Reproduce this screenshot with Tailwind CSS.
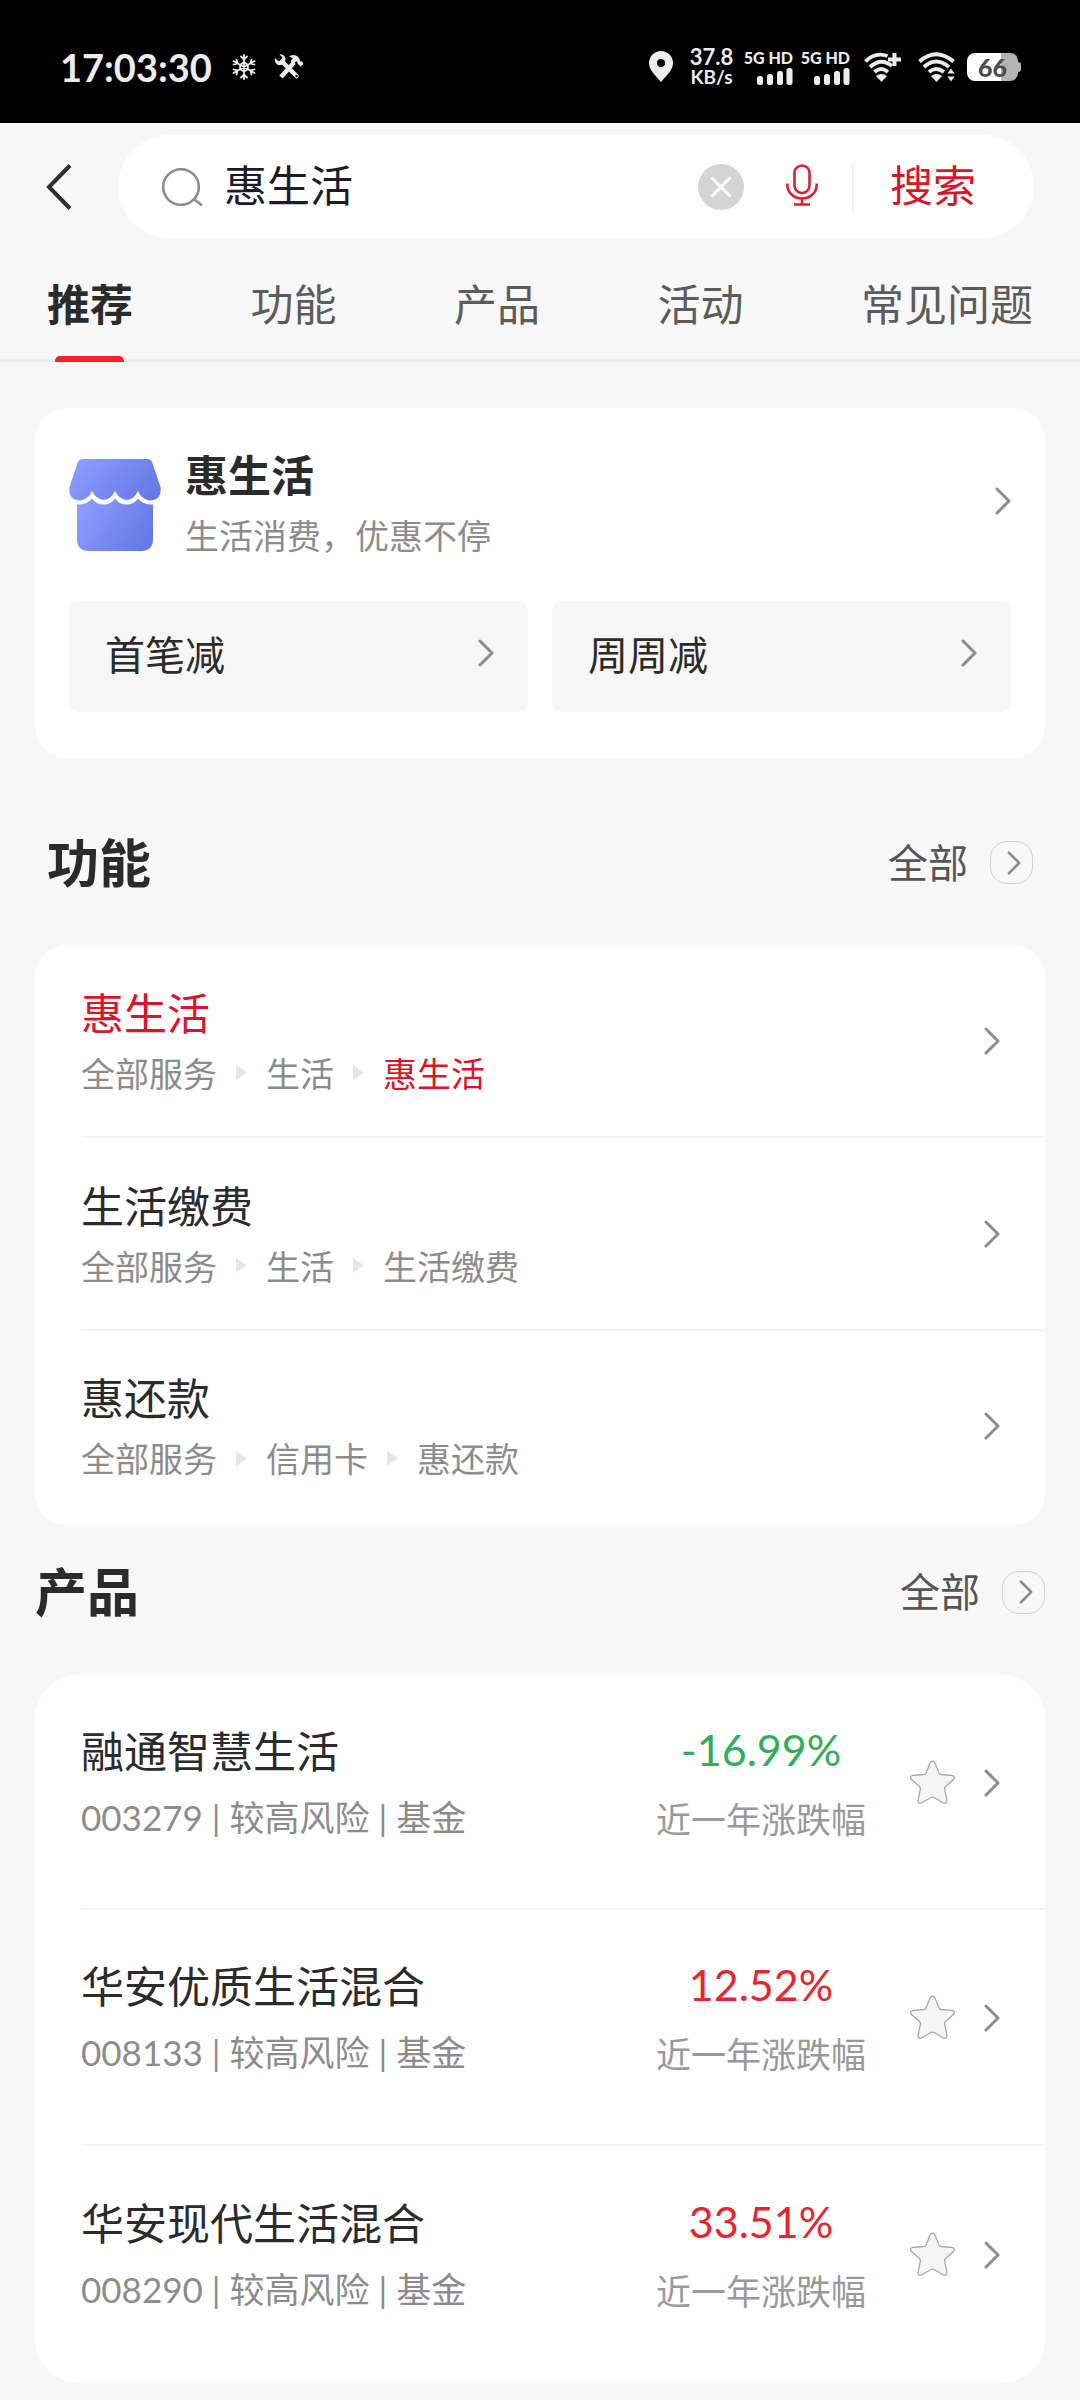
<!DOCTYPE html>
<html lang="zh-CN">
<head>
<meta charset="utf-8">
<meta name="viewport" content="width=device-width, initial-scale=1">
<title>惠生活 - 搜索</title>
<script src="https://cdn.jsdelivr.net/npm/@tailwindcss/browser@4"></script>
</head>
<body class="min-h-screen bg-[#f7f7f7] font-['Noto_Sans_CJK_SC',sans-serif] text-[#2b2b2b]">

<svg class="hidden" aria-hidden="true">
  <symbol id="chevron" viewBox="0 0 16 28"><path d="M2 2 14 14 2 26" fill="none" stroke="currentColor" stroke-width="3" stroke-linecap="round" stroke-linejoin="round"/></symbol>
  <symbol id="caret" viewBox="0 0 11 15"><path d="M0 0 11 7.500 0 15Z" fill="#e6e6e6"/></symbol>
  <symbol id="star" viewBox="0 0 46 46"><path d="M20 3Q22.500-.8 25 3L29 13Q29.500 14.300 31 14.500L42 15.300Q46 16 43.500 19.500L35.500 26.500Q34.500 27.500 34.600 29L37 40.500Q37 44 33.500 43L24.500 37.800Q22.500 36.600 20.500 37.800L11.500 43Q8 44 8 40.500L10.400 29Q10.500 27.500 9.500 26.500L1.500 19.500Q-1 16 3 15.300L14 14.500Q15.500 14.300 16 13Z" fill="#f5f5f5" stroke="#a6a6a6" stroke-width="1.300"/></symbol>
  <symbol id="bars" viewBox="0 0 36 17"><g fill="#ececec"><rect x="0" y="8" width="6" height="9" rx="2.500"/><rect x="10" y="6" width="6" height="11" rx="2.500"/><rect x="20" y="3" width="6" height="14" rx="2.500"/><rect x="29.500" y="0" width="6" height="17" rx="2.500"/></g></symbol>
</svg>

<!-- System status bar -->
<div class="flex h-[123px] items-center justify-between bg-black pt-[14px] pr-[59px] pb-1 pl-[60px] font-['Lato','Noto_Sans_CJK_SC',sans-serif] text-[#ececec]">
  <div class="flex items-center">
    <span class="text-[38px] leading-[44px] font-bold">17:03:30</span>
    <svg class="ml-5 h-[26px] w-6" viewBox="0 0 24 26" fill="none" stroke="currentColor" stroke-width="1.800" stroke-linecap="round">
      <path d="M12 1v24M1.500 7 22.500 19M1.500 19 22.500 7M9 2.500l3 3 3-3M9 23.500l3-3 3 3M1.500 10.500l4-1-1-4M22.500 15.500l-4 1 1 4M1.500 15.500l4 1-1 4M22.500 10.500l-4-1 1-4"/>
      <circle cx="12" cy="13" r="4"/>
    </svg>
    <svg class="ml-[18px] h-[26px] w-[30px]" viewBox="0 0 30 26" fill="none" stroke="currentColor">
      <path d="M8 7.500 22.500 22" stroke-width="4.500" stroke-linecap="round"/>
      <path d="M7 23 20 8.500" stroke-width="4.500"/>
      <path d="M1 4 4.500 7.300 7.600 6.300 8.300 3.200 5.200 .3Q10-.3 11.300 4q.8 4-2 6.300Q6 12 2.800 10.200 0 8 1 4Z" fill="currentColor" stroke="none"/>
      <path d="M15 2.500Q20-.5 24 2.800 26 4.500 26 7.500l2-.3L29.500 10 26.500 12.500 23.800 9.800 23 7.500 21.500 7.800 19.800 10 16.500 7 18.800 4.500Q17.500 2.800 15 2.500Z" fill="currentColor" stroke="none"/>
      <circle cx="22.500" cy="22" r="1.200" fill="#000" stroke="none"/>
    </svg>
  </div>
  <div class="flex items-center">
    <svg class="h-[31px] w-6" viewBox="0 0 24 31"><path fill="currentColor" fill-rule="evenodd" d="M12 0A12 12 0 0 0 0 12C0 19 6 24 12 31 18 24 24 19 24 12A12 12 0 0 0 12 0ZM12 8a4 4 0 1 1 0 8 4 4 0 0 1 0-8Z"/></svg>
    <div class="ml-4 w-[45px] text-center font-bold">
      <div class="text-[22px] leading-[20px]">37.8</div>
      <div class="text-[19px] leading-[20px]">KB/s</div>
    </div>
    <div class="ml-3 flex w-[47px] flex-col items-end gap-[2px]">
      <div class="text-[16px] leading-[17px] font-black whitespace-nowrap">5G HD</div>
      <svg class="h-[17px] w-9"><use href="#bars"/></svg>
    </div>
    <div class="ml-[10px] flex w-[47px] flex-col items-end gap-[2px]">
      <div class="text-[16px] leading-[17px] font-black whitespace-nowrap">5G HD</div>
      <svg class="h-[17px] w-9"><use href="#bars"/></svg>
    </div>
    <svg class="ml-[14px] h-[30px] w-[38px]" viewBox="0 0 38 30" fill="none" stroke="currentColor" stroke-width="3.800">
      <path d="M1.500 9.500Q11-.5 23.500 4M6 15Q17 5 28 14M10.500 20Q17 14 24 20"/>
      <path d="M30.500 1v13M24 7.500h13" stroke-width="4"/>
      <path d="M12 24Q17.500 20 23 24L17.500 30Z" fill="currentColor" stroke="none"/>
    </svg>
    <svg class="ml-4 h-[30px] w-[37px]" viewBox="0 0 37 30" fill="none" stroke="currentColor" stroke-width="3.800">
      <path d="M1.500 9.500Q18-5 35.500 9.500M6 15Q18 4 31 15M11 20Q18 14 26 20"/>
      <path d="M13 24Q18.500 20 24 24L18.500 30Z" fill="currentColor" stroke="none"/>
      <path d="M29.500 21.500 33 16.500l3.500 5ZM29.500 24.500 33 29.500l3.500-5Z" fill="currentColor" stroke="none"/>
    </svg>
    <div class="ml-3 flex items-center">
      <div class="h-7 w-[51px] rounded-[8px] bg-linear-to-r from-white from-66% to-[#b4b4b4] to-66% text-center text-[25px] leading-7 font-black text-[#4c4c4c]">66</div>
      <div class="h-[10px] w-[3px] rounded-r-sm bg-[#b4b4b4]"></div>
    </div>
  </div>
</div>

<!-- Search bar -->
<form class="flex items-center pt-3 pr-[46px] pl-[46px]" onsubmit="return false">
  <button type="button" aria-label="返回" class="mr-[46px] shrink-0">
    <svg class="h-[46px] w-[26px]" viewBox="0 0 26 46" fill="none" stroke="#2e2e3a" stroke-width="4"><path d="M24 1.500 3 23 24 44.500"/></svg>
  </button>
  <div class="flex h-[103px] min-w-0 flex-1 items-center rounded-full bg-white pr-[58px] pl-11">
    <svg class="h-[40px] w-[42px] shrink-0" viewBox="0 0 42 40" fill="none" stroke="#8c8c8c" stroke-width="2.600"><circle cx="19" cy="20" r="17.800"/><path d="m32 32 8 6.500"/></svg>
    <input type="text" aria-label="搜索内容" value="惠生活" class="ml-5 h-20 min-w-0 flex-1 bg-transparent pb-2 text-[43px] leading-[64px] text-[#1c1c28] outline-none">
    <button type="button" aria-label="清除" class="shrink-0">
      <svg class="size-[46px]" viewBox="0 0 46 46"><circle cx="23" cy="23" r="23" fill="#d4d4d4"/><path d="m13.500 13.500 19 19m0-19-19 19" stroke="#fff" stroke-width="2.800"/></svg>
    </button>
    <button type="button" aria-label="语音搜索" class="ml-[42px] shrink-0 pb-1">
      <svg class="h-[42px] w-8" viewBox="0 0 32 42" fill="none" stroke="#dc1e32" stroke-width="2.600"><rect x="8.500" y="1.500" width="15" height="27.500" rx="7.500"/><path d="M1.300 19.500v1.500a14.700 13.500 0 0 0 29.400 0v-1.500M16 34.500v6M8 40.500h16"/></svg>
    </button>
    <span class="ml-[34px] h-[50px] w-[2px] bg-[#f2f2f2]"></span>
    <button type="submit" class="ml-9 shrink-0 pb-2 text-[43px] leading-[64px] text-[#dc1428]">搜索</button>
  </div>
</form>

<!-- Result categories -->
<nav class="flex h-[124px] justify-between border-b-3 border-[#ebebeb] px-[47px] pt-[7px] text-[43px] leading-[64px] text-[#5c5c5c]">
  <a href="#" aria-current="page" class="relative flex items-center font-bold text-[#2b2b2b]">推荐<span class="absolute -bottom-[3px] left-2 h-[6px] w-[69px] rounded-t-[5px] bg-[#f5222d]"></span></a>
  <a href="#" class="flex items-center">功能</a>
  <a href="#" class="flex items-center">产品</a>
  <a href="#" class="flex items-center">活动</a>
  <a href="#" class="flex items-center">常见问题</a>
</nav>

<main class="px-[35px] pt-[46px] pb-[17px]">

  <!-- Best match -->
  <section class="rounded-[32px] bg-white px-[34px] pt-[37px] pb-[46px]">
    <a href="#" class="flex items-center">
      <svg class="h-[94px] w-[92px] shrink-0" viewBox="0 0 92 94">
        <defs><linearGradient id="shop" x1="0" y1=".3" x2="1" y2=".7"><stop offset="0" stop-color="#8b9cff"/><stop offset="1" stop-color="#6578e4"/></linearGradient></defs>
        <path fill="url(#shop)" d="M14 1H78Q82 1 83.500 5L91.500 29Q93 42 80.500 42.500 72 41 69 33 65 41.500 57.500 42 50 41 46 33 42 41.500 34.500 42 27 41 23 33 20 41 11.500 42.500-1 42 .5 29L8.500 5Q10 1 14 1Z"/>
        <path fill="url(#shop)" d="M8 46.500Q18 47 23 40.500 27 46.500 34.500 46.500 42 46.500 46 40.500 50 46.500 57.500 46.500 65 46.500 69 40.500 74 47 84 46.500V81Q84 93 72 93H20Q8 93 8 81Z"/>
      </svg>
      <span class="ml-6 flex flex-1 flex-col">
        <span class="pb-1 text-[43px] leading-[56px] font-bold">惠生活</span>
        <span class="text-[34px] leading-[60px] text-[#8c8c8c]">生活消费，优惠不停</span>
      </span>
      <svg class="mb-2 h-7 w-4 text-[#8c8c8c]"><use href="#chevron"/></svg>
    </a>
    <div class="mt-9 grid grid-cols-2 gap-6 text-[40px] leading-[60px]">
      <a href="#" class="flex h-[111px] items-center justify-between rounded-[10px] bg-[#f6f6f6] pr-[34px] pb-[7px] pl-9">首笔减<svg class="h-7 w-4 text-[#8c8c8c]"><use href="#chevron"/></svg></a>
      <a href="#" class="flex h-[111px] items-center justify-between rounded-[10px] bg-[#f6f6f6] pr-[34px] pb-[7px] pl-9">周周减<svg class="h-7 w-4 text-[#8c8c8c]"><use href="#chevron"/></svg></a>
    </div>
  </section>

  <!-- Functions -->
  <section>
    <div class="flex h-[187px] items-center justify-between px-3 pt-[22px]">
      <h2 class="pb-1 text-[52px] leading-[72px] font-bold">功能</h2>
      <a href="#" class="flex items-center gap-[22px] text-[40px] leading-[60px] text-[#555]"><span class="pb-1">全部</span><span class="flex size-[43px] items-center justify-center rounded-[17px] border border-[#d0d0d0] pl-1"><svg class="h-6 w-[14px] text-[#8c8c8c]"><use href="#chevron"/></svg></span></a>
    </div>
    <ul class="rounded-[32px] bg-white pl-[46px]">
      <li class="border-b-2 border-[#f3f3f3]">
        <a href="#" class="flex h-[191px] items-center justify-between pr-[45px]">
          <span class="flex flex-col">
            <span class="text-[43px] leading-[64px] text-[#dc1428]">惠生活</span>
            <span class="flex items-center gap-[19px] text-[34px] leading-[60px] text-[#8c8c8c]">全部服务<svg class="h-[15px] w-[11px]"><use href="#caret"/></svg>生活<svg class="h-[15px] w-[11px]"><use href="#caret"/></svg><span class="text-[#dc1428]">惠生活</span></span>
          </span>
          <svg class="h-7 w-4 text-[#8c8c8c]"><use href="#chevron"/></svg>
        </a>
      </li>
      <li class="border-b-2 border-[#f3f3f3]">
        <a href="#" class="flex h-[191px] items-center justify-between pr-[45px]">
          <span class="flex flex-col">
            <span class="text-[43px] leading-[64px]">生活缴费</span>
            <span class="flex items-center gap-[19px] text-[34px] leading-[60px] text-[#8c8c8c]">全部服务<svg class="h-[15px] w-[11px]"><use href="#caret"/></svg>生活<svg class="h-[15px] w-[11px]"><use href="#caret"/></svg>生活缴费</span>
          </span>
          <svg class="h-7 w-4 text-[#8c8c8c]"><use href="#chevron"/></svg>
        </a>
      </li>
      <li>
        <a href="#" class="flex h-[194px] items-center justify-between pr-[45px] pb-1">
          <span class="flex flex-col">
            <span class="text-[43px] leading-[64px]">惠还款</span>
            <span class="flex items-center gap-[19px] text-[34px] leading-[60px] text-[#8c8c8c]">全部服务<svg class="h-[15px] w-[11px]"><use href="#caret"/></svg>信用卡<svg class="h-[15px] w-[11px]"><use href="#caret"/></svg>惠还款</span>
          </span>
          <svg class="h-7 w-4 text-[#8c8c8c]"><use href="#chevron"/></svg>
        </a>
      </li>
    </ul>
  </section>

  <!-- Products -->
  <section>
    <div class="flex h-[150px] items-center justify-between pb-4">
      <h2 class="pb-1 text-[52px] leading-[72px] font-bold">产品</h2>
      <a href="#" class="flex items-center gap-[22px] text-[40px] leading-[60px] text-[#555]"><span class="pb-1">全部</span><span class="flex size-[43px] items-center justify-center rounded-[17px] border border-[#d0d0d0] pl-1"><svg class="h-6 w-[14px] text-[#8c8c8c]"><use href="#chevron"/></svg></span></a>
    </div>
    <ul class="rounded-[44px] bg-white pl-[46px]">
      <li class="flex h-[235px] items-center border-b-2 border-[#f3f3f3] pr-[45px] pb-[18px]">
        <a href="#" class="flex flex-1 flex-col">
          <span class="text-[43px] leading-[68px]">融通智慧生活</span>
          <span class="font-['Lato','Noto_Sans_CJK_SC',sans-serif] text-[35px] leading-[68px] text-[#8c8c8c]">003279 | 较高风险 | 基金</span>
        </a>
        <div class="flex flex-col items-center">
          <span class="font-['Lato',sans-serif] text-[43px] leading-[70px] text-[#2fae57]">-16.99%</span>
          <span class="text-[35px] leading-[66px] text-[#999]">近一年涨跌幅</span>
        </div>
        <button type="button" aria-label="收藏" class="ml-11"><svg class="size-[46px]"><use href="#star"/></svg></button>
        <svg class="ml-7 h-7 w-4 text-[#8c8c8c]"><use href="#chevron"/></svg>
      </li>
      <li class="flex h-[236px] items-center border-b-2 border-[#f3f3f3] pr-[45px] pb-[18px]">
        <a href="#" class="flex flex-1 flex-col">
          <span class="text-[43px] leading-[68px]">华安优质生活混合</span>
          <span class="font-['Lato','Noto_Sans_CJK_SC',sans-serif] text-[35px] leading-[68px] text-[#8c8c8c]">008133 | 较高风险 | 基金</span>
        </a>
        <div class="flex flex-col items-center">
          <span class="font-['Lato',sans-serif] text-[43px] leading-[70px] text-[#e6252f]">12.52%</span>
          <span class="text-[35px] leading-[66px] text-[#999]">近一年涨跌幅</span>
        </div>
        <button type="button" aria-label="收藏" class="ml-11"><svg class="size-[46px]"><use href="#star"/></svg></button>
        <svg class="ml-7 h-7 w-4 text-[#8c8c8c]"><use href="#chevron"/></svg>
      </li>
      <li class="flex h-[237px] items-center pr-[45px] pb-5">
        <a href="#" class="flex flex-1 flex-col">
          <span class="text-[43px] leading-[68px]">华安现代生活混合</span>
          <span class="font-['Lato','Noto_Sans_CJK_SC',sans-serif] text-[35px] leading-[68px] text-[#8c8c8c]">008290 | 较高风险 | 基金</span>
        </a>
        <div class="flex flex-col items-center">
          <span class="font-['Lato',sans-serif] text-[43px] leading-[70px] text-[#e6252f]">33.51%</span>
          <span class="text-[35px] leading-[66px] text-[#999]">近一年涨跌幅</span>
        </div>
        <button type="button" aria-label="收藏" class="ml-11"><svg class="size-[46px]"><use href="#star"/></svg></button>
        <svg class="ml-7 h-7 w-4 text-[#8c8c8c]"><use href="#chevron"/></svg>
      </li>
    </ul>
  </section>
</main>
</body>
</html>
